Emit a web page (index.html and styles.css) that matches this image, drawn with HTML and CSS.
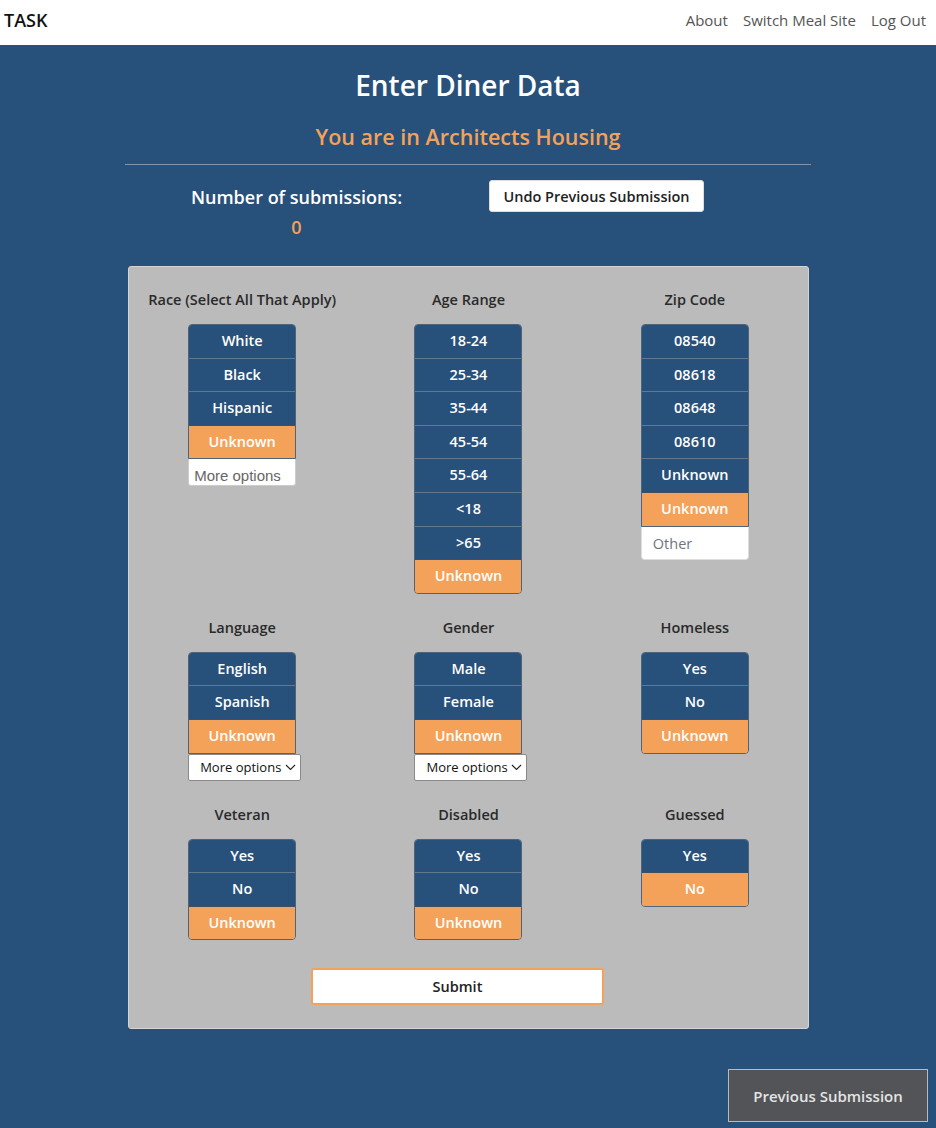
FILE: index.html
```html
<!DOCTYPE html>
<html>
<head>
<meta charset="utf-8">
<title>TASK</title>
<link rel="stylesheet" href="styles.css">
</head>
<body>
<nav class="navbar">
  <div class="brand">TASK</div>
  <div class="nav-links">
    <a class="nav-link">About</a>
    <a class="nav-link">Switch Meal Site</a>
    <a class="nav-link">Log Out</a>
  </div>
</nav>
<main class="main">
  <h1 class="title">Enter Diner Data</h1>
  <h2 class="subtitle">You are in Architects Housing</h2>
  <hr class="divider">
  <div class="subs-row">
    <div class="subs-count">
      <div class="subs-label">Number of submissions:</div>
      <div class="subs-num">0</div>
    </div>
    <div class="subs-action">
      <button class="undo-btn">Undo Previous Submission</button>
    </div>
  </div>

  <section class="card">
    <div class="grid">
      <div class="field">
        <div class="field-label">Race (Select All That Apply)</div>
        <div class="group">
          <div class="opt">White</div>
          <div class="opt">Black</div>
          <div class="opt">Hispanic</div>
          <div class="opt sel">Unknown</div>
        </div>
        <div class="more-input">More options</div>
      </div>
      <div class="field">
        <div class="field-label">Age Range</div>
        <div class="group">
          <div class="opt">18-24</div>
          <div class="opt">25-34</div>
          <div class="opt">35-44</div>
          <div class="opt">45-54</div>
          <div class="opt">55-64</div>
          <div class="opt">&lt;18</div>
          <div class="opt">&gt;65</div>
          <div class="opt sel last">Unknown</div>
        </div>
      </div>
      <div class="field">
        <div class="field-label">Zip Code</div>
        <div class="group">
          <div class="opt">08540</div>
          <div class="opt">08618</div>
          <div class="opt">08648</div>
          <div class="opt">08610</div>
          <div class="opt">Unknown</div>
          <div class="opt sel">Unknown</div>
        </div>
        <div class="other-input">Other</div>
      </div>

      <div class="field">
        <div class="field-label">Language</div>
        <div class="group">
          <div class="opt">English</div>
          <div class="opt">Spanish</div>
          <div class="opt sel">Unknown</div>
        </div>
        <div class="select"><span>More options</span><svg class="chev" width="11" height="7" viewBox="0 0 11 7"><path d="M1 1l4.5 4.5L10 1" fill="none" stroke="#222" stroke-width="1.1"/></svg></div>
      </div>
      <div class="field">
        <div class="field-label">Gender</div>
        <div class="group">
          <div class="opt">Male</div>
          <div class="opt">Female</div>
          <div class="opt sel">Unknown</div>
        </div>
        <div class="select"><span>More options</span><svg class="chev" width="11" height="7" viewBox="0 0 11 7"><path d="M1 1l4.5 4.5L10 1" fill="none" stroke="#222" stroke-width="1.1"/></svg></div>
      </div>
      <div class="field">
        <div class="field-label">Homeless</div>
        <div class="group">
          <div class="opt">Yes</div>
          <div class="opt">No</div>
          <div class="opt sel last">Unknown</div>
        </div>
      </div>

      <div class="field">
        <div class="field-label">Veteran</div>
        <div class="group">
          <div class="opt">Yes</div>
          <div class="opt">No</div>
          <div class="opt sel last">Unknown</div>
        </div>
      </div>
      <div class="field">
        <div class="field-label">Disabled</div>
        <div class="group">
          <div class="opt">Yes</div>
          <div class="opt">No</div>
          <div class="opt sel last">Unknown</div>
        </div>
      </div>
      <div class="field">
        <div class="field-label">Guessed</div>
        <div class="group">
          <div class="opt">Yes</div>
          <div class="opt sel last">No</div>
        </div>
      </div>
    </div>
    <button class="submit-btn">Submit</button>
  </section>
</main>
<button class="prev-btn">Previous Submission</button>
</body>
</html>
```

FILE: styles.css
```css
* { box-sizing: border-box; }
html, body { margin: 0; padding: 0; }
body {
  font-family: "Open Sans", "Liberation Sans", sans-serif;
  background: #27507a;
  min-height: 1128px;
}
.navbar {
  height: 45px;
  background: #fff;
  display: flex;
  align-items: center;
  justify-content: space-between;
  padding: 0 10px 5px 4px;
}
.brand { font-size: 18px; font-weight: 600; color: #111; }
.nav-links { display: flex; gap: 15px; }
.nav-link { font-size: 15px; color: #555; }

.main {
  width: 686px;
  margin: 0 auto;
  padding-top: 23px;
  padding-bottom: 60px;
}
.title {
  margin: 0;
  text-align: center;
  color: #fff;
  font-size: 28px;
  font-weight: 600;
  line-height: 34px;
}
.subtitle {
  margin: 22px 0 0;
  text-align: center;
  color: #f4a259;
  font-size: 21.5px;
  font-weight: 600;
  line-height: 26px;
}
.divider {
  margin: 14px 0 0;
  border: 0;
  border-top: 1px solid #7f96ae;
}
.subs-row {
  display: flex;
  margin-top: 15px;
  height: 86px;
}
.subs-count {
  width: 343px;
  text-align: center;
  padding-top: 5px;
}
.subs-label {
  color: #fff;
  font-size: 18px;
  font-weight: 600;
  line-height: 24px;
}
.subs-num {
  color: #f4a259;
  font-size: 18px;
  font-weight: 600;
  line-height: 24px;
  margin-top: 6px;
}
.subs-action { padding-left: 21px; }
.undo-btn {
  font-family: inherit;
  background: #fff;
  border: 1px solid #ddd;
  border-radius: 3px;
  width: 215px;
  height: 32px;
  font-size: 14.5px;
  font-weight: 600;
  color: #222;
  padding: 0;
}

.card {
  width: 681px;
  margin-left: 3px;
  background: #bbbbbb;
  border: 1px solid #d4d4d4;
  border-radius: 3px;
  padding: 23px 0 23px;
}
.grid {
  display: grid;
  grid-template-columns: repeat(3, 1fr);
  row-gap: 24px;
  align-items: start;
}
.field { display: flex; flex-direction: column; align-items: center; }
.field-label {
  font-size: 14.5px;
  font-weight: 600;
  color: #2a2a2a;
  line-height: 19px;
  margin-bottom: 15px;
}
.group {
  width: 108px;
  border: 1px solid #4f6478;
  border-radius: 4px 4px 0 0;
  overflow: hidden;
}
.opt {
  height: 33.6px;
  line-height: 32px;
  text-align: center;
  color: #fff;
  font-size: 14.5px;
  font-weight: 600;
  background: #27507a;
  border-top: 1px solid #62788f;
}
.opt:first-child { border-top: 0; height: 32.6px; }
.opt.sel {
  background: #f4a259;
  border-top: 1px solid #3f4f5f;
}
.group:has(.last) { border-radius: 4px; }
.more-input {
  width: 108px;
  height: 27px;
  background: #fff;
  border-radius: 0 0 3px 3px;
  font-family: "Liberation Sans", Arial, sans-serif;
  font-size: 15px;
  color: #666;
  padding: 8px 0 0 5px;
  line-height: 18px;
  overflow: hidden;
  border: 1px solid #ccc;
  border-top: 0;
}
.other-input {
  width: 108px;
  height: 33px;
  background: #fff;
  border-radius: 0 0 4px 4px;
  font-size: 14.5px;
  color: #6c757d;
  padding-left: 11px;
  line-height: 33px;
  border: 1px solid #ddd;
  border-top: 0;
}
.select {
  width: 113px;
  height: 27px;
  margin-left: 5px;
  background: #fff;
  border: 1px solid #8a8a8a;
  border-radius: 2px;
  display: flex;
  align-items: center;
  justify-content: space-between;
  padding: 0 4px 0 11px;
  font-size: 13px;
  color: #111;
}
.chev { flex: none; }
.submit-btn {
  display: block;
  margin: 28px 0 0 182px;
  width: 293px;
  height: 37px;
  background: #fff;
  border: 2px solid #f4a259;
  border-radius: 3px;
  font-family: inherit;
  font-size: 14.5px;
  font-weight: 600;
  color: #222;
}
.prev-btn {
  position: fixed;
  right: 8px;
  bottom: 6px;
  width: 200px;
  height: 53px;
  background: #525457;
  border: 1px solid #b8bcc2;
  color: #e4e4e4;
  font-family: inherit;
  font-size: 15px;
  font-weight: 600;
  padding: 0;
}
```
